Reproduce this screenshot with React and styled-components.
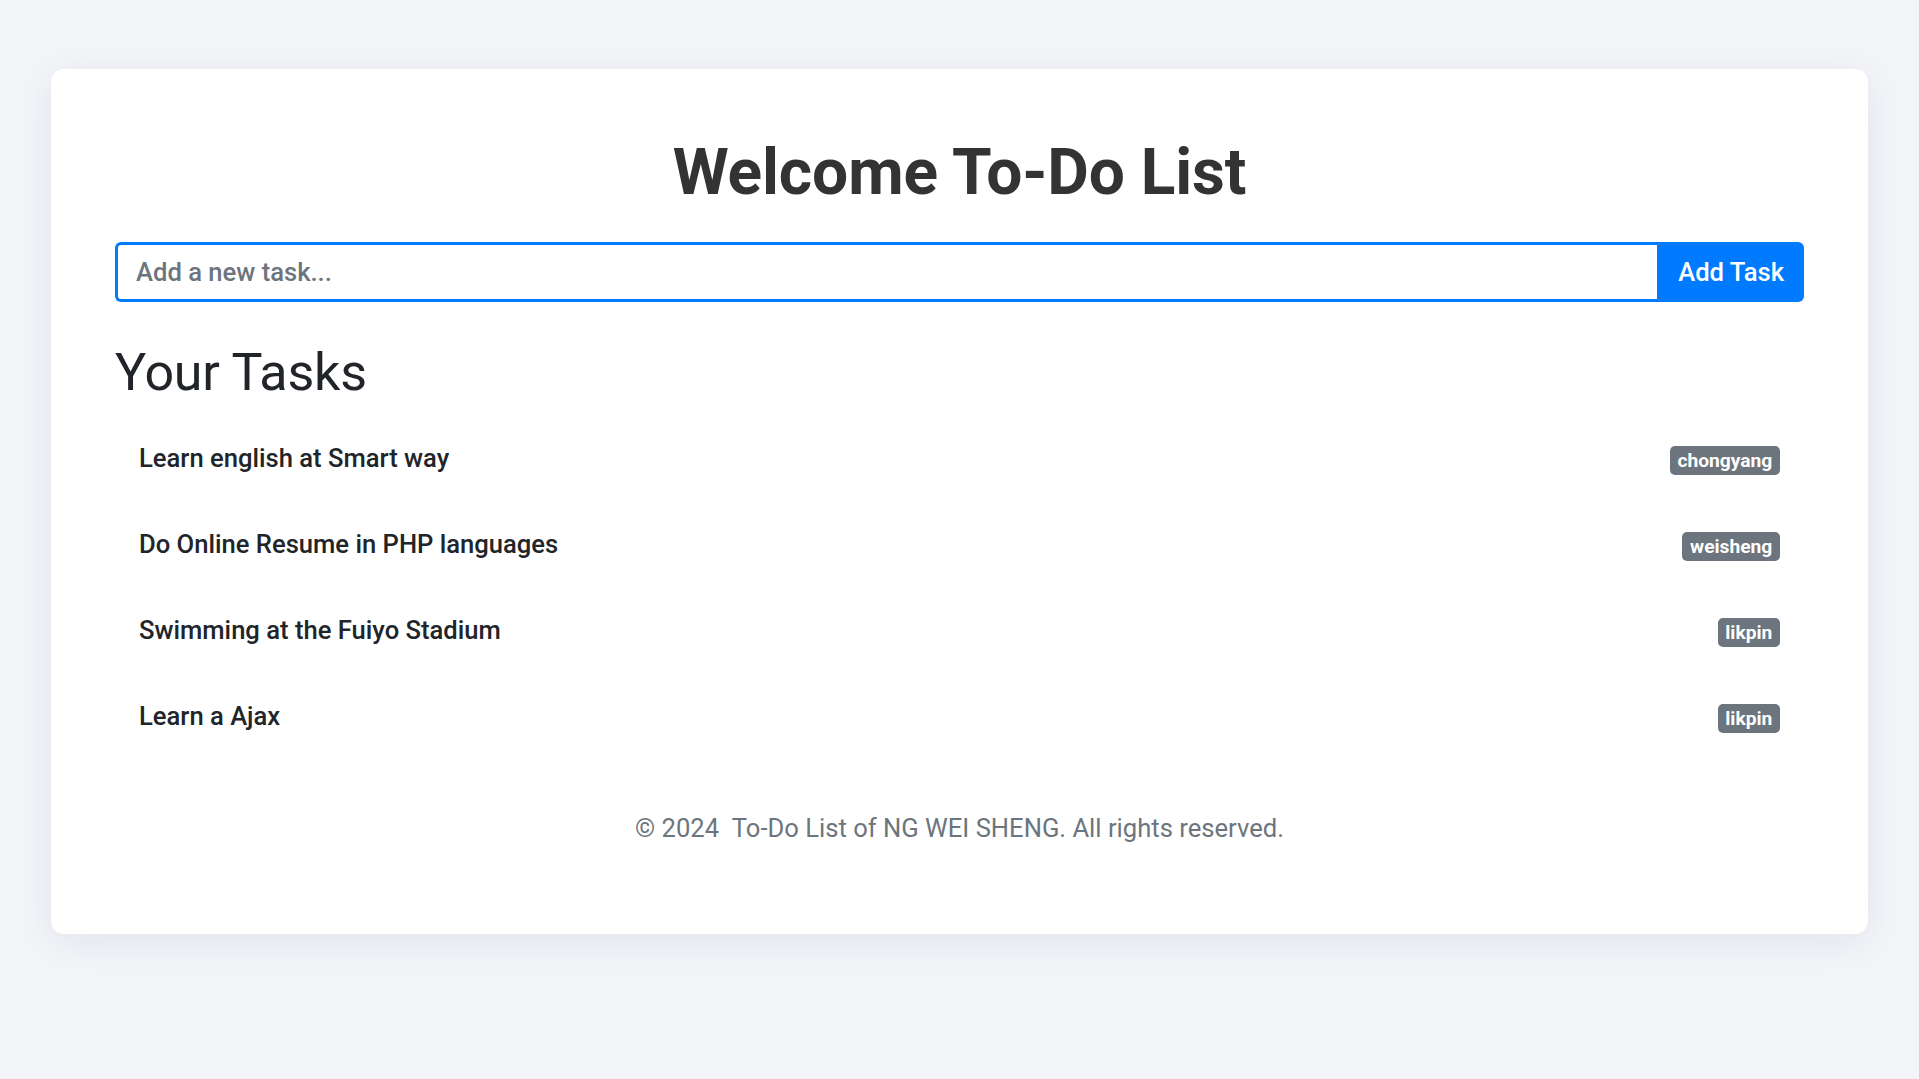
import React from "react";
import styled, { createGlobalStyle } from "styled-components";

const GlobalStyle = createGlobalStyle`
  * { box-sizing: border-box; }
  html, body {
    margin: 0;
    padding: 0;
    background: #f4f5f9;
    min-height: 100vh;
    font-family: Roboto, "Liberation Sans", Arial, sans-serif;
    color: #212529;
  }
`;

const Page = styled.div`
  padding: 69px 51px;
`;

const Card = styled.main`
  background: #ffffff;
  border-radius: 13px;
  box-shadow: 0 8px 40px rgba(20, 30, 60, 0.08);
  padding: 66px 64px 87px;
`;

const Title = styled.h1`
  margin: 0 0 30px;
  text-align: center;
  font-size: 64px;
  line-height: 1.2;
  font-weight: 700;
  letter-spacing: -0.1px;
  color: #333333;
`;

const InputGroup = styled.form`
  display: flex;
  height: 60px;
`;

const TaskInput = styled.input`
  flex: 1;
  min-width: 0;
  height: 100%;
  border: 3px solid #007bff;
  border-right: none;
  border-radius: 6px 0 0 6px;
  padding: 0 18px;
  font-family: inherit;
  font-size: 25.6px;
  font-weight: 500;
  color: #495057;
  outline: none;
  &::placeholder {
    color: #6c757d;
  }
`;

const AddButton = styled.button`
  height: 100%;
  border: none;
  border-radius: 0 6px 6px 0;
  background: #007bff;
  color: #ffffff;
  padding: 0 20px 0 21px;
  font-family: inherit;
  font-size: 25.6px;
  font-weight: 500;
  cursor: pointer;
`;

const SectionTitle = styled.h2`
  margin: 40px 0 11px;
  font-size: 52px;
  line-height: 1.2;
  font-weight: 400;
  letter-spacing: -0.2px;
  color: #212529;
`;

const TaskList = styled.ul`
  list-style: none;
  margin: 0;
  padding: 0;
`;

const TaskItem = styled.li`
  display: flex;
  justify-content: space-between;
  align-items: baseline;
  padding: 23.8px 24px;
  font-size: 25.6px;
  line-height: 1.5;
  font-weight: 500;
  color: #212529;
`;

const Badge = styled.span`
  display: inline-block;
  background: #6c757d;
  color: #ffffff;
  font-size: 19.2px;
  font-weight: 700;
  line-height: 1;
  padding: 4.8px 7.7px;
  border-radius: 5px;
`;

const Footer = styled.footer`
  margin-top: 49.5px;
  text-align: center;
  font-size: 25.6px;
  line-height: 1.5;
  color: #6c757d;
`;

const tasks = [
  { text: "Learn english at Smart way", owner: "chongyang" },
  { text: "Do Online Resume in PHP languages", owner: "weisheng" },
  { text: "Swimming at the Fuiyo Stadium", owner: "likpin" },
  { text: "Learn a Ajax", owner: "likpin" },
];

export default function App() {
  return (
    <>
      <GlobalStyle />
      <Page>
        <Card>
          <Title>Welcome To-Do List</Title>
          <InputGroup onSubmit={(e) => e.preventDefault()}>
            <TaskInput type="text" placeholder="Add a new task..." />
            <AddButton type="submit">Add Task</AddButton>
          </InputGroup>
          <SectionTitle>Your Tasks</SectionTitle>
          <TaskList>
            {tasks.map((t, i) => (
              <TaskItem key={i}>
                <span>{t.text}</span>
                <Badge>{t.owner}</Badge>
              </TaskItem>
            ))}
          </TaskList>
          <Footer>© 2024 {"\u00a0"}To-Do List of NG WEI SHENG. All rights reserved.</Footer>
        </Card>
      </Page>
    </>
  );
}
